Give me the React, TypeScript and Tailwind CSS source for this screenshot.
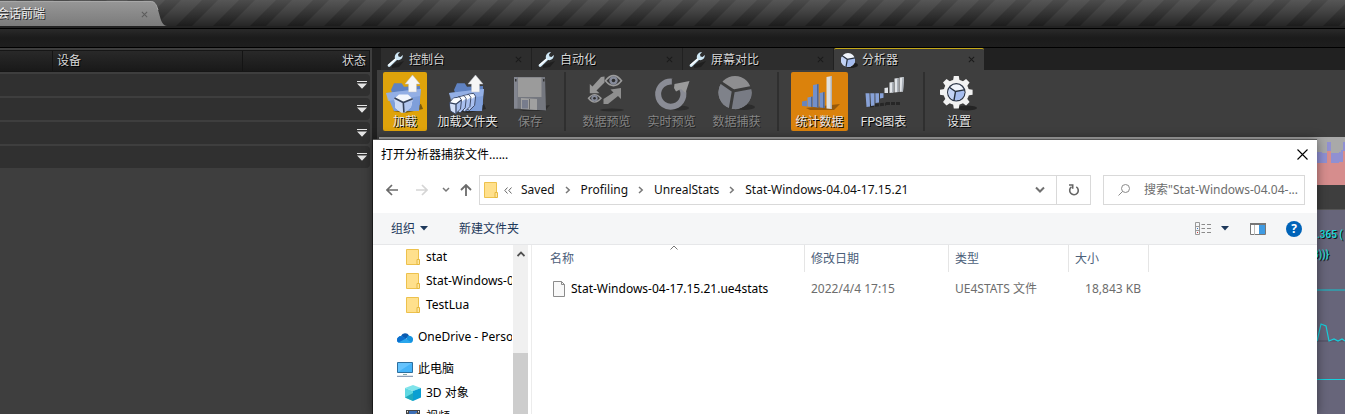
import React from "react";

const UE_TEXT = "text-[12px] text-[#d6d6d6] [text-shadow:1px_1px_0_#000]";

function SmallX() {
  return (
    <svg viewBox="0 0 8 8" className="h-[7px] w-[7px]" stroke="currentColor" strokeWidth="1.2">
      <path d="M1 1L7 7M7 1L1 7" />
    </svg>
  );
}

function TitleBar() {
  return (
    <header className="relative flex h-7 shrink-0 items-end overflow-hidden bg-[#222] pb-0.5">
      <svg className="absolute inset-0 h-[26px] w-full" aria-hidden="true">
        <defs>
          <linearGradient id="barLight" x1="0" y1="0" x2="0" y2="1">
            <stop offset="0" stopColor="#565656" />
            <stop offset="0.5" stopColor="#404040" />
            <stop offset="1" stopColor="#262626" />
          </linearGradient>
          <linearGradient id="barDark" x1="0" y1="0" x2="0" y2="1">
            <stop offset="0" stopColor="#4c4c4c" />
            <stop offset="0.5" stopColor="#343434" />
            <stop offset="1" stopColor="#1c1c1c" />
          </linearGradient>
          <pattern id="stripes" width="37" height="26" patternUnits="userSpaceOnUse">
            <rect width="37" height="26" fill="url(#barLight)" />
            <path d="M17 0H33L7 26H-9ZM54 0H70L44 26H28Z" fill="url(#barDark)" />
          </pattern>
        </defs>
        <rect width="100%" height="26" fill="url(#stripes)" />
      </svg>
      <div className="relative flex h-[25px]">
        <div className="flex w-[150px] items-center justify-between border-t border-[#a8a8a8] bg-linear-to-b from-[#969696] to-[#7b7b7b]">
          <span className="-ml-[3px] text-[12px] leading-4 text-[#eee] [text-shadow:1px_1px_0_#222]">会话前端</span>
          <button aria-label="关闭" className="mr-0.5 text-[#5c5c5c]"><SmallX /></button>
        </div>
        <svg viewBox="0 0 17 25" className="h-[25px] w-[17px]" aria-hidden="true">
          <defs>
            <linearGradient id="tabEnd" x1="0" y1="0" x2="0" y2="1">
              <stop offset="0" stopColor="#969696" />
              <stop offset="1" stopColor="#7b7b7b" />
            </linearGradient>
          </defs>
          <path d="M0 0C5 0 6 3 8 9C11 18 11 24 17 25H0Z" fill="url(#tabEnd)" />
          <path d="M0 .5C5 .5 6 3 8 9" fill="none" stroke="#a8a8a8" />
        </svg>
      </div>
    </header>
  );
}

function SessionPanel() {
  return (
    <section className="w-[372px] shrink-0 bg-[#3e3e3e] pt-0.5 pr-0.5">
      <div className={`flex h-[22px] border border-l-0 border-[#161616] bg-linear-to-b from-[#292929] to-[#191919] leading-[21px] ${UE_TEXT}`}>
        <div className="w-[53px] border-r border-[#141414]" />
        <div className="w-[190px] border-r border-[#141414] pl-1">设备</div>
        <div className="flex-1 pr-[3px] text-right">状态</div>
      </div>
      <ul className="mt-0.5 flex flex-col gap-0.5">
        {[0, 1, 2, 3].map((i) => (
          <li key={i} className="flex h-[22px] items-center justify-end rounded-r bg-[#303030] pr-[3px]">
            <button aria-label="展开">
              <svg viewBox="0 0 10 8" className="h-2 w-2.5" fill="#e4e4e4"><path d="M0 0H10V1H0ZM0 2.500H10L5 7.800Z" /></svg>
            </button>
          </li>
        ))}
      </ul>
    </section>
  );
}

function Wrench() {
  return (
    <svg viewBox="0 0 18 18" className="h-[18px] w-[18px]">
      <path d="M5 14L17 10L12 16L5 17Z" fill="#111" opacity=".5" />
      <path d="M.8 13.800L8 7.500C7 4 10 .8 13 1L11 3.500L11.500 5.500L13.500 6L15.800 4C16 7.500 13 9.800 10 9L3.200 15.600C1.800 16.500 0 15.300 .8 13.800Z" fill="#cfe8f6" />
      <path d="M1.500 14.200L9 7.700" stroke="#fff" strokeWidth="1.200" />
    </svg>
  );
}

function Ball({ cx, cy, r, dim = false }: { cx: number; cy: number; r: number; dim?: boolean }) {
  return (
    <g transform={`translate(${cx} ${cy}) scale(${r / 10})`}>
      <circle r="10" fill={dim ? "#8e8e90" : "#f1f5fc"} />
      <path d="M-8.500-5.300L-1-.8L-2.800 9.600A10 10 0 0 1-8.500-5.300Z" fill={dim ? "#7f828a" : "#c3d3f5"} />
      <path d="M-1-.8L9.700-2.600A10 10 0 0 1-2.800 9.600Z" fill={dim ? "#787b84" : "#a5bcee"} />
      <path d="M-8.800-6.300L-1-1L10-3M-1-1L-2.900 10" stroke={dim ? "#3c3c3c" : "#26303f"} strokeWidth="1.800" fill="none" />
    </g>
  );
}

function Tab({ label, active = false }: { label: string; active?: boolean }) {
  return (
    <div
      role="tab"
      aria-selected={active}
      className={`flex w-[150px] items-center border-t pr-[9px] pl-1.5 ${active ? "rounded-t-xs border-[#c4a91a] bg-[#3e3e3e]" : "border-[#2d2d2d] bg-[#2d2d2d]"}`}
    >
      {active ? (
        <svg viewBox="0 0 18 18" className="h-[18px] w-[18px]">
          <ellipse cx="11" cy="14" rx="7" ry="3" fill="#1c1c1c" />
          <Ball cx={8} cy={9} r={7} />
        </svg>
      ) : (
        <Wrench />
      )}
      <span className={`ml-1 flex-1 leading-4 ${UE_TEXT}`}>{label}</span>
      <button aria-label={`关闭${label}`} className="text-[#1b1b1b]"><SmallX /></button>
    </div>
  );
}

function FolderBack() {
  return (
    <>
      <path d="M8 37L36 30L38 35L20 39Z" fill="#111" opacity=".5" />
      <path d="M6 16L9 9.300H16.700L19 12.700L35 12V31L14 36Z" fill="#5f82c2" />
      <path d="M1 19L26 16L36 15L34 37L9 37Z" fill="#7f9fda" />
      <path d="M1 19L26 16L36 15L35 22L3 27Z" fill="#9bb6ea" opacity=".7" />
      <path d="M27.500 1L35 10H31.500V18H23.500V10H20Z" fill="#f6f6f6" stroke="#b9bec8" strokeWidth=".5" />
    </>
  );
}

function LoadIcon() {
  return (
    <>
      <FolderBack />
      <path d="M9.500 24.500L14 20.500L23 20.500L27.700 25L26 33L20 38.500H16L10.500 34Z" fill="#f3f7fd" />
      <path d="M9.500 24.500L18.300 28.500L18.800 38.500H16L10.500 34Z" fill="#cddaf5" />
      <path d="M27.700 25L18.300 28.500L18.800 38.500H20L26 33Z" fill="#b2c6ef" />
      <path d="M9.500 24L18.300 28.500L27.700 24.800M18.300 28.500L18.900 38.500" stroke="#35415a" strokeWidth="1.600" fill="none" />
    </>
  );
}

function LoadFolderIcon() {
  return (
    <>
      <FolderBack />
      {[3, 2, 1, 0].map((i) => (
        <g key={i} transform={`translate(${1.5 + i * 4.7} ${-i * 1.2})`}>
          <path d="M0 29L4 24L10 23L12 26L11 35L6 40L1 37Z" fill="#a9c0ef" stroke="#35415a" strokeWidth=".9" />
          <path d="M.5 28.500L4 24.400L9.800 23.500L11.500 26L6.500 29.500Z" fill="#fbfdff" />
          <path d="M.5 29.500L6 30.500V39.300L1.400 36.500Z" fill="#d3dff7" />
        </g>
      ))}
      <path d="M2 28.800L8 30.200L13 26.300M8 30.200V39.500" stroke="#35415a" strokeWidth="1.200" fill="none" />
    </>
  );
}

function SaveIcon() {
  return (
    <>
      <path d="M20 34L40 31L35 37L10 37Z" fill="#222" opacity=".6" />
      <path d="M4 3H35L36 36.500L4 34.500Z" fill="#74777f" />
      <path d="M8 3.500H31.500V23H8Z" fill="#9b9b9b" />
      <path d="M4 3H7.500V34.500H4Z" fill="#838690" />
      <path d="M11 24L27 25V36L11 35Z" fill="#a0a0a0" />
      <path d="M12 26H18V34.500H12Z" fill="#777c8c" />
      <path d="M19.500 25V35.500" stroke="#6b6b6b" />
      <path d="M5 5H6.500V7.500H5ZM33 5H34.500V7.500H33Z" fill="#333" />
    </>
  );
}

function PreviewIcon() {
  return (
    <>
      <ellipse cx="25" cy="36" rx="12" ry="1.500" fill="#2c2c2c" />
      <path d="M17.500 2.500V8.500L9.500 16.500L12.500 19.300H2.800V10L5.500 12.500L14 3Z" fill="#979797" />
      <path d="M16.500 30V25L26.500 18.500L23.500 15.500L34 14V25L31 22L21 30Z" fill="#8f8f8f" />
      <path d="M18.500 6.700Q26.500-3.500 34.500 6.700Q26.500 16.500 18.500 6.700Z" fill="#3a3a3a" stroke="#9b9b9b" strokeWidth="1.600" />
      <circle cx="26.500" cy="6.500" r="4.200" fill="#858a99" /><circle cx="26.500" cy="6.500" r="1.800" fill="#2d2d2d" />
      <path d="M1.500 24.300Q7.500 17 14 24.300Q7.500 32 1.500 24.300Z" fill="#3a3a3a" stroke="#9b9b9b" strokeWidth="1.400" />
      <circle cx="7.500" cy="24.300" r="3.200" fill="#858a99" /><circle cx="7.500" cy="24.300" r="1.300" fill="#2d2d2d" />
    </>
  );
}

function RefreshIcon() {
  return (
    <>
      <ellipse cx="27" cy="34" rx="10" ry="2.500" fill="#2e2e2e" />
      <path d="M20.500 7.600A12.600 12.600 0 1 0 29.800 14" stroke="#8a8c95" strokeWidth="6" fill="none" />
      <path d="M22.500 10L37.500 7L33.500 19L29 15L24 17.500L22 14Z" fill="#9a9a9a" />
      <path d="M20.500 4.500V12" stroke="#3e3e3e" strokeWidth="1.400" />
    </>
  );
}

function CaptureIcon() {
  return (
    <>
      <ellipse cx="27" cy="33" rx="11" ry="3" fill="#2c2c2c" />
      <Ball cx={18} cy={18.500} r={16.500} dim />
    </>
  );
}

function StatsIcon() {
  return (
    <>
      <path d="M6 34L40 30L34 36H10Z" fill="#6d4008" opacity=".6" />
      <path d="M2 27.500L7 26.500V32.500L2 32Z" fill="#6985ba" />
      <path d="M7.500 23.500L12.500 22.500V33L7.500 32.500Z" fill="#7894c8" />
      <path d="M13 11L18.500 10V33.500L13 33Z" fill="#7390ca" />
      <path d="M19.500 19L24.500 18V34L19.500 33.500Z" fill="#7592cb" />
      <path d="M26.500 3L32 2V35L26.500 34.500Z" fill="#e0e0e0" />
      <path d="M17 10.300L18.500 10V33.500H17ZM23 18.300L24.500 18V34H23ZM11 22.800L12.500 22.500V33H11Z" fill="#4e6798" />
      <path d="M30.500 2.300L32 2V35H30.500Z" fill="#b4b4b4" />
    </>
  );
}

function FpsIcon() {
  return (
    <>
      <path d="M6 32L22 30M22 29.500H37" stroke="#262626" strokeWidth="3" strokeDasharray="4 1" />
      <path d="M1.500 19.300H5.500L6 32.500L2.500 33ZM6.300 19.300H10.500V31.500L7 32ZM11.300 19.300H15V28.500L11.500 29ZM16 19.300H19.500V23.800L16 24.500Z" fill="#88a2d8" />
      <path d="M20.500 14L24 13.500V19H20.500ZM25.500 8.500L29.500 8V18.500L25.500 19ZM30.500 4.500L34.500 4V18L30.500 18.500ZM35.500 3.500L40 3L39 17.500L35.500 18Z" fill="#e1e4e8" />
      <path d="M28 8.200L29.500 8V18.500H28ZM33 4.200L34.500 4V18H33ZM38.300 3.200L40 3L39 17.500H37.500Z" fill="#aab0b8" />
    </>
  );
}

function SettingsIcon() {
  return (
    <>
      <ellipse cx="28" cy="34" rx="10" ry="2.500" fill="#242424" />
      <g transform="translate(17.300 18.300)">
        {[0, 45, 90, 135].map((a) => (
          <path key={a} d="M-2.500-16.300H2.500L3.500-10V10L2.500 16.300H-2.500L-3.500 10V-10Z" fill="#f2f2f2" transform={`rotate(${a})`} />
        ))}
        <circle r="12.800" fill="#f2f2f2" />
        <circle r="9.300" fill="#2b3546" />
      </g>
      <Ball cx={17.300} cy={18.300} r={8} />
    </>
  );
}

type Tool = { label: string; icon: () => React.ReactElement; width: string; tone?: string; disabled?: boolean };

function ToolButton({ label, icon: Icon, width, tone = "", disabled }: Tool) {
  return (
    <button disabled={disabled} className={`flex h-[59px] flex-col items-center rounded-xs pt-0.5 ${width} ${tone}`}>
      <svg viewBox="0 0 40 40" className="h-10 w-10 shrink-0">
        <Icon />
      </svg>
      <span className={`whitespace-nowrap text-[12px] leading-4 ${disabled ? "text-[#858585] [text-shadow:1px_1px_0_#222]" : "text-[#e6e6e6] [text-shadow:1px_1px_0_#000]"}`}>{label}</span>
    </button>
  );
}

function Divider() {
  return <div className="mx-1 h-[59px] w-0.5 bg-[#2f2f2f]" />;
}

function ProfilerPanel() {
  return (
    <section className="flex min-w-0 flex-1 flex-col bg-[#212121] pl-[5px]">
      <div role="tablist" className="flex h-[22px] shrink-0 gap-px pl-1">
        <Tab label="控制台" />
        <Tab label="自动化" />
        <Tab label="屏幕对比" />
        <Tab label="分析器" active />
      </div>
      <div className="flex min-h-0 flex-1 flex-col bg-[#3e3e3e]">
        <div className="flex h-[67px] shrink-0 gap-2 pt-0.5 pl-1.5">
          <ToolButton label="加载" icon={LoadIcon} width="w-11" tone="bg-[#dfa30b]" />
          <ToolButton label="加载文件夹" icon={LoadFolderIcon} width="w-[65px]" />
          <ToolButton label="保存" icon={SaveIcon} width="w-11" disabled />
          <Divider />
          <ToolButton label="数据预览" icon={PreviewIcon} width="w-[57px]" disabled />
          <ToolButton label="实时预览" icon={RefreshIcon} width="w-[57px]" disabled />
          <ToolButton label="数据捕获" icon={CaptureIcon} width="w-[57px]" disabled />
          <Divider />
          <ToolButton label="统计数据" icon={StatsIcon} width="w-[57px]" tone="bg-[#db820c]" />
          <ToolButton label="FPS图表" icon={FpsIcon} width="w-[55px]" />
          <Divider />
          <ToolButton label="设置" icon={SettingsIcon} width="w-11" />
        </div>
        <div className="ml-0.5 flex h-12 shrink-0 justify-end bg-[#a9a9a9]">
          <svg viewBox="0 0 28 48" className="h-12 w-7">
            <path d="M0 15H5V16H10V5H14V16H22V15H24V13H26V5H28V48H0Z" fill="#9090d2" />
            <path d="M0 26H10V14H14V26H22V25H26V14H28V48H0Z" fill="#d68d8d" />
          </svg>
        </div>
        <div className="mt-6 ml-0.5 flex min-h-0 flex-1 justify-end border-t border-[#555] bg-[#67657a]">
          <div className="relative w-7 overflow-hidden whitespace-nowrap">
            <svg viewBox="0 0 28 204" className="absolute top-0 left-0 h-[204px] w-7" fill="none">
              <path d="M0 80H28" stroke="#3b94a4" strokeWidth="2" />
              <path d="M0 131H28" stroke="#504e60" />
              <path d="M0 131L4 114L9 116L12 131L17 129L21 131L25 129L28 131" stroke="#16cfdc" strokeWidth="1.200" />
              <path d="M0 169.500H28" stroke="#16cfdc" />
            </svg>
            <div className="relative pt-[15px] text-[10px] leading-5 font-medium text-[#12dfdf] [text-shadow:1px_1px_0_#111]">
              <p>.365 (</p>
              <p className="-ml-1">{"3))}"}</p>
            </div>
          </div>
        </div>
      </div>
    </section>
  );
}

function Folder() {
  return (
    <svg viewBox="0 0 14 16" className="h-4 w-3.5">
      <path d="M.5.5H12.500V15.500H.5Z" fill="#ffe08c" stroke="#edc14c" />
      <path d="M11 10.500H13.500V15.500H11Z" fill="#ffe69f" stroke="#e6b83f" />
    </svg>
  );
}

function Chevron() {
  return (
    <svg viewBox="0 0 6 8" className="mx-2.5 h-2 w-1.5" fill="none" stroke="#777" strokeWidth="1.500"><path d="M1 1L4.200 4L1 7" /></svg>
  );
}

function AddressRow() {
  const crumbs = ["Saved", "Profiling", "UnrealStats"];
  return (
    <div className="flex h-[30px] items-center pr-3">
      <div className="flex w-[106px] shrink-0 items-center pl-[13px]">
        <button aria-label="后退">
          <svg viewBox="0 0 12 12" className="h-3 w-3" fill="none" stroke="#6b6b6b" strokeWidth="1.700"><path d="M12 6H1M6 1L1 6L6 11" /></svg>
        </button>
        <button aria-label="前进" disabled className="ml-[18px]">
          <svg viewBox="0 0 12 12" className="h-3 w-3" fill="none" stroke="#d5d5d5" strokeWidth="1.700"><path d="M0 6H11M6 1L11 6L6 11" /></svg>
        </button>
        <button aria-label="最近位置" className="ml-3.5">
          <svg viewBox="0 0 8 6" className="h-1.5 w-2" fill="none" stroke="#777" strokeWidth="1.500"><path d="M1 1L4 4L7 1" /></svg>
        </button>
        <button aria-label="向上" className="ml-2.5">
          <svg viewBox="0 0 12 12" className="h-3 w-3" fill="none" stroke="#6b6b6b" strokeWidth="1.800"><path d="M6 12V1M1 6L6 1L11 6" /></svg>
        </button>
      </div>
      <div className="flex h-full min-w-0 flex-1 border border-[#d9d9d9]">
        <nav className="flex min-w-0 flex-1 items-center pl-1 text-[#111]">
          <Folder />
          <svg viewBox="0 0 8 7" className="ml-1.5 h-[7px] w-2" fill="none" stroke="#666"><path d="M3.500 .5L.8 3.500L3.500 6.500M7.500 .5L4.800 3.500L7.500 6.500" /></svg>
          <div className="ml-[9px] flex items-center">
            {crumbs.map((name) => (
              <React.Fragment key={name}>
                <button>{name}</button>
                <Chevron />
              </React.Fragment>
            ))}
            <button>Stat-Windows-04.04-17.15.21</button>
          </div>
        </nav>
        <button aria-label="历史" className="px-[11px]">
          <svg viewBox="0 0 10 8" className="h-2 w-2.5" fill="none" stroke="#707070" strokeWidth="2"><path d="M1 1.500L5 5.500L9 1.500" /></svg>
        </button>
        <button aria-label="刷新" className="flex w-[34px] items-center justify-center border-l border-[#d9d9d9]">
          <svg viewBox="0 0 12 12" className="h-3 w-3" fill="none" stroke="#666" strokeWidth="1.600"><path d="M8.300 2.800A4.300 4.300 0 1 1 3.500 2.900" /><path d="M1 1H4.700V4.800" /></svg>
        </button>
      </div>
      <label className="ml-3 flex h-full w-[202px] shrink-0 items-center border border-[#d9d9d9] pl-3.5">
        <svg viewBox="0 0 12 12" className="h-3 w-3 shrink-0" fill="none" stroke="#8a8a8a"><circle cx="7.500" cy="4.500" r="4" /><path d="M4.600 7.400L.5 11.500" /></svg>
        <input
          type="text"
          aria-label="搜索"
          placeholder={'搜索"Stat-Windows-04.04-...'}
          className="ml-3.5 w-full min-w-0 bg-transparent outline-none placeholder:text-[#6d6d6d]"
        />
      </label>
    </div>
  );
}

function CommandBar() {
  return (
    <div className="mt-2 flex h-8 items-center border-b border-[#e6e7e9] bg-[#f5f6f7] pr-[15px] pl-[18px] text-[#1e395b]">
      <button className="flex items-center gap-[5px]">
        组织
        <svg viewBox="0 0 8 5" className="h-[5px] w-2" fill="currentColor"><path d="M0 0H8L4 4.500Z" /></svg>
      </button>
      <button className="ml-[31px]">新建文件夹</button>
      <div className="ml-auto flex items-center">
        <button aria-label="视图" className="flex items-center gap-2.5">
          <svg viewBox="0 0 16 13" className="h-[13px] w-4" fill="none">
            <path d="M.5.5H4.500V12.500H.5ZM.5 4.500H4.500M.5 8.500H4.500" stroke="#999" />
            <path d="M6.500 2.500H10M12 2.500H16M6.500 6.500H10M12 6.500H16M6.500 10.500H10M12 10.500H16" stroke="#8b8b8b" />
            <path d="M2 6H3V7H2Z" fill="#3b78c8" /><path d="M2 10H3V11H2Z" fill="#c33" />
          </svg>
          <svg viewBox="0 0 8 5" className="h-[5px] w-2" fill="currentColor"><path d="M0 0H8L4 4.500Z" /></svg>
        </button>
        <button aria-label="预览窗格" className="ml-[21px]">
          <svg viewBox="0 0 16 12" className="h-3 w-4"><path d="M.5.5H15.500V11.500H.5Z" fill="#fff" stroke="#777" /><path d="M0 0H16V2H0Z" fill="#777" /><path d="M4.500 2V12" stroke="#bbb" /><path d="M9 2H15V11H9Z" fill="#3f9be3" /></svg>
        </button>
        <button aria-label="帮助" className="ml-5 flex h-4 w-4 items-center justify-center rounded-full bg-[#0063b8] font-['Open_Sans'] text-[12px] leading-4 font-bold text-white">?</button>
      </div>
    </div>
  );
}

function SideItem({ icon, label, nested = false, gap = false }: { icon: React.ReactNode; label: string; nested?: boolean; gap?: boolean }) {
  return (
    <li className={gap ? "mt-2" : ""}>
      <button className={`flex h-6 w-full items-center overflow-hidden whitespace-nowrap ${nested ? "pl-8" : "pl-6"}`}>
        <span className="flex w-4 shrink-0 justify-center">{icon}</span>
        <span className="ml-[5px]">{label}</span>
      </button>
    </li>
  );
}

const cloud = (
  <svg viewBox="0 0 16 11" className="h-[11px] w-4">
    <path d="M4 4A4.500 4.500 0 0 1 12 3.500L8 8L0 8C0 6 2 4 4 4Z" fill="#0a5bb0" />
    <path d="M10 5A3.500 3.500 0 0 1 16 8C16 10 14.500 11 13 11H8Z" fill="#1593e0" />
    <path d="M0 8C0 5.500 3 3.500 5.500 4.500L14.500 10.500C14 11 13 11 12 11H3C1.500 11 0 9.800 0 8Z" fill="#2aa6ec" />
    <path d="M0 8C0 5.500 3 3.500 5.500 4.500L9 6.500L1.500 10.500C.6 10 0 9 0 8Z" fill="#0c6fce" />
  </svg>
);

const computer = (
  <svg viewBox="0 0 16 15" className="h-[15px] w-4">
    <path d="M.5.5H15.500V10.500H.5Z" fill="#45b3f8" stroke="#2d6f9e" />
    <path d="M1 1H15L1 10Z" fill="#74cbff" opacity=".7" />
    <path d="M6 12.500H10" stroke="#8aa" /><path d="M0 14.300H16" stroke="#7188a5" />
  </svg>
);

const cube = (
  <svg viewBox="0 0 16 16" className="h-4 w-4">
    <path d="M0 3L8 0L16 3L8 6Z" fill="#7fe3ea" />
    <path d="M0 3L8 6V16L0 12.500Z" fill="#5fd8e2" />
    <path d="M16 3L8 6V16L16 12.500Z" fill="#0a9fd2" />
    <path d="M0 12.500L8 8V16Z" fill="#1fa9bd" />
  </svg>
);

const film = (
  <svg viewBox="0 0 14 14" className="h-3.5 w-3.5">
    <path d="M0 0H14V14H0Z" fill="#444" /><path d="M3 1H11V13H3Z" fill="#3b6db5" /><path d="M7 5L11 3V13H3Z" fill="#d9a54a" />
    <path d="M1.500 1V14M12.500 1V14" stroke="#eee" strokeDasharray="1.500 1.500" />
  </svg>
);

function Sidebar() {
  return (
    <div className="flex w-[159px] shrink-0 overflow-hidden border-r border-[#ececec]">
      <ul className="w-[139px] shrink-0">
        <SideItem nested icon={<Folder />} label="stat" />
        <SideItem nested icon={<Folder />} label="Stat-Windows-04.04" />
        <SideItem nested icon={<Folder />} label="TestLua" />
        <SideItem gap icon={cloud} label="OneDrive - Personal" />
        <SideItem gap icon={computer} label="此电脑" />
        <SideItem nested icon={cube} label="3D 对象" />
        <SideItem nested icon={film} label="视频" />
      </ul>
      <div className="ml-px flex w-[15px] flex-col bg-[#f0f0f0]">
        <button aria-label="向上滚动" className="flex h-[108px] justify-center pt-1.5">
          <svg viewBox="0 0 8 6" className="h-1.5 w-2" fill="none" stroke="#505050" strokeWidth="1.800"><path d="M.5 5L4 1.500L7.500 5" /></svg>
        </button>
        <div className="flex-1 bg-[#cdcdcd]" />
      </div>
    </div>
  );
}

function FileList() {
  const head = "h-[27px] border-r border-[#e5e5e5] px-1.5 text-left font-normal text-[#4c607a]";
  return (
    <div className="relative min-w-0 flex-1">
      <svg viewBox="0 0 8 5" className="absolute top-0 left-[138px] h-[5px] w-2" fill="none" stroke="#777"><path d="M.5 4.500L4 1L7.500 4.500" /></svg>
      <table className="w-[617px] table-fixed border-separate border-spacing-0">
        <thead>
          <tr>
            <th className={`w-[273px] ${head}`}><button className="ml-3">名称</button></th>
            <th className={`w-36 ${head}`}><button>修改日期</button></th>
            <th className={`w-[120px] ${head}`}><button>类型</button></th>
            <th className={`w-20 ${head}`}><button>大小</button></th>
          </tr>
        </thead>
        <tbody>
          <tr className="h-[34px] text-[#6d6d6d]">
            <td className="text-black">
              <span className="ml-[21px] flex items-center gap-1.5 whitespace-nowrap">
                <svg viewBox="0 0 12 16" className="h-4 w-3"><path d="M.5.5H8.500L11.500 3.500V15.500H.5Z" fill="#f8f8f8" stroke="#8b8b8b" /><path d="M8.500.5V3.500H11.500" fill="none" stroke="#8b8b8b" /></svg>
                Stat-Windows-04-17.15.21.ue4stats
              </span>
            </td>
            <td className="px-1.5">2022/4/4 17:15</td>
            <td className="px-1.5">UE4STATS 文件</td>
            <td className="pr-2 text-right whitespace-nowrap">18,843 KB</td>
          </tr>
        </tbody>
      </table>
    </div>
  );
}

function OpenDialog() {
  return (
    <div
      role="dialog"
      aria-label="打开分析器捕获文件"
      className="absolute top-[139px] right-7 bottom-0 left-[373px] flex flex-col overflow-hidden border-t border-[#555] bg-white font-['Noto_Sans','Noto_Sans_CJK_SC',sans-serif] text-[12px] leading-4 text-black shadow-[0_0_10px_rgba(0,0,0,0.45)]"
    >
      <div className="flex h-[35px] shrink-0 items-start justify-between pt-[7px] pr-[9px] pl-2">
        <h1>打开分析器捕获文件......</h1>
        <button aria-label="关闭" className="pt-0.5">
          <svg viewBox="0 0 11 11" className="h-[11px] w-[11px]" stroke="#000" strokeWidth="1.100"><path d="M.5.5L10.500 10.500M10.500.5L.5 10.500" /></svg>
        </button>
      </div>
      <AddressRow />
      <CommandBar />
      <div className="flex min-h-0 flex-1">
        <Sidebar />
        <FileList />
      </div>
    </div>
  );
}

export default function App() {
  return (
    <main className="relative flex h-screen flex-col overflow-hidden bg-[#212121] font-['Roboto','Noto_Sans_CJK_SC',sans-serif]">
      <TitleBar />
      <div className="h-5 shrink-0 border-y border-black bg-linear-to-b from-[#2a2a2a] via-[#1b1b1b] to-[#1e1e1e]" />
      <div className="flex min-h-0 flex-1">
        <SessionPanel />
        <ProfilerPanel />
      </div>
      <OpenDialog />
    </main>
  );
}
